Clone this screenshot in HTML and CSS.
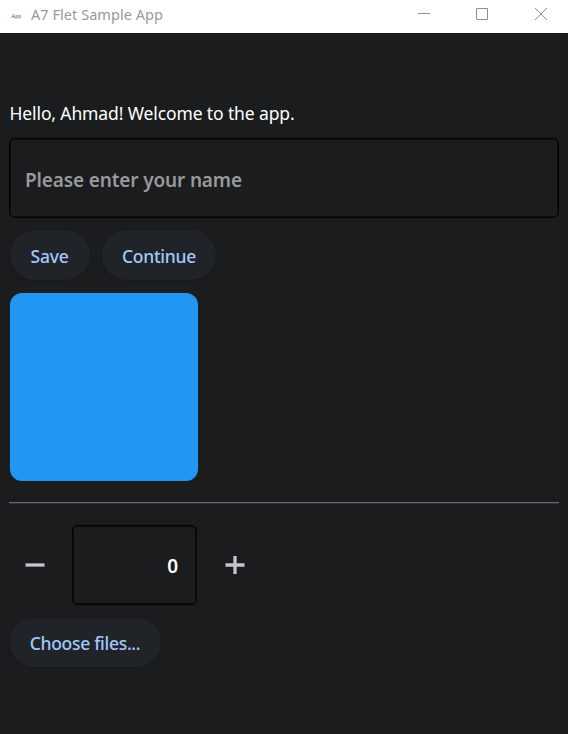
FILE: index.html
```html
<!DOCTYPE html>
<html lang="en">
<head>
<meta charset="utf-8">
<title>A7 Flet Sample App</title>
<link rel="stylesheet" href="styles.css">
</head>
<body>
<header class="titlebar">
  <span class="app-icon">App</span>
  <span class="title">A7 Flet Sample App</span>
  <div class="window-controls">
    <svg width="12" height="12" viewBox="0 0 12 12"><path d="M0 5.5H12"/></svg>
    <svg width="12" height="12" viewBox="0 0 12 12"><path d="M.5 .5H11.5V11.5H.5Z"/></svg>
    <svg width="12" height="12" viewBox="0 0 12 12"><path d="M0 0L12 12M12 0L0 12"/></svg>
  </div>
</header>
<main class="page">
  <p class="greeting"><span>Hello, Ahmad! Welcome to the app.</span></p>
  <div class="field name-field"><span class="placeholder">Please enter your name</span></div>
  <div class="actions">
    <button class="btn save"><span>Save</span></button>
    <button class="btn continue"><span>Continue</span></button>
  </div>
  <div class="box"></div>
  <hr class="divider">
  <div class="counter">
    <button class="icon-btn" aria-label="Decrease"><svg width="20" height="20" viewBox="0 0 20 20"><path d="M.5 10H19.5"/></svg></button>
    <div class="field number-field"><span>0</span></div>
    <button class="icon-btn" aria-label="Increase"><svg width="20" height="20" viewBox="0 0 20 20"><path d="M.5 10H19.5M10 1V19"/></svg></button>
  </div>
  <button class="btn choose"><span>Choose files...</span></button>
</main>
</body>
</html>
```
FILE: styles.css
```css
* { box-sizing: border-box; }
body {
  margin: 0;
  height: 734px;
  overflow: hidden;
  background: #1b1c1e;
  font-family: "Noto Sans", "Open Sans", sans-serif;
  color: #fff;
}
.titlebar {
  display: flex;
  align-items: center;
  height: 33px;
  padding: 0 21px 5px 11px;
  background: #fff;
}
.app-icon {
  width: 20px;
  padding-top: 3px;
  font: 6px/8px "Liberation Serif", serif;
  color: #555;
}
.title { font-size: 14.5px; line-height: 20px; color: #999; white-space: nowrap; letter-spacing: 0.05px; }
.window-controls { display: flex; gap: 47px; margin-left: auto; }
.window-controls svg { display: block; fill: none; stroke: #8f8f8f; stroke-width: 1; }
.window-controls svg:nth-child(2) { margin-left: -1px; }
.page { padding: 67px 9px 0; }
.greeting { margin: 0 0 0 1px; height: 38px; font-size: 17.5px; line-height: 26px; white-space: nowrap; letter-spacing: -0.12px; text-indent: -0.5px; }
.field {
  display: flex;
  align-items: center;
  border: 1px solid #020304;
  border-radius: 5px;
  box-shadow: inset 0 0 0 1px #050607a0;
}
.name-field { height: 80px; padding: 4px 15px 0; }
.placeholder { font-size: 19px; line-height: 28px; font-weight: 600; color: #98999b; white-space: nowrap; letter-spacing: -0.14px; }
.actions { display: flex; gap: 12px; margin: 12px 0 13px 1px; }
.btn {
  display: flex;
  align-items: center;
  justify-content: center;
  height: 50px;
  padding: 2px 0 0;
  border: 0;
  border-radius: 25px;
  background: #202328;
  box-shadow: 0 1px 2px #15161780;
  color: #a2c9fb;
  font: 500 17.5px/26px "Noto Sans", "Open Sans", sans-serif;
  letter-spacing: -0.25px;
  white-space: nowrap;
}
.save { width: 80px; padding-right: 1px; }
.continue { width: 114px; }
.choose { width: 151px; height: 49px; margin: 13px 0 0 1px; padding-top: 1px; padding-right: 1px; letter-spacing: -0.3px; }
.box { width: 188px; height: 188px; margin-left: 1px; border-radius: 12px; background: #2196f3; }
.divider { height: 1px; margin: 21px 0 22px; border: 0; background: #656a70; box-shadow: 0 1px 0 #656a7050; }
.counter { display: flex; align-items: center; height: 80px; }
.icon-btn { display: flex; align-items: center; justify-content: center; width: 50px; height: 50px; padding: 0; border: 0; background: none; }
.icon-btn svg { fill: none; stroke: #c3c6cd; stroke-width: 3.3; }
.icon-btn:first-child { padding-left: 1px; }
.number-field { justify-content: flex-end; width: 125px; height: 80px; margin: 0 13px; padding: 2px 18px 0 0; font-size: 19px; font-weight: 600; }
```
